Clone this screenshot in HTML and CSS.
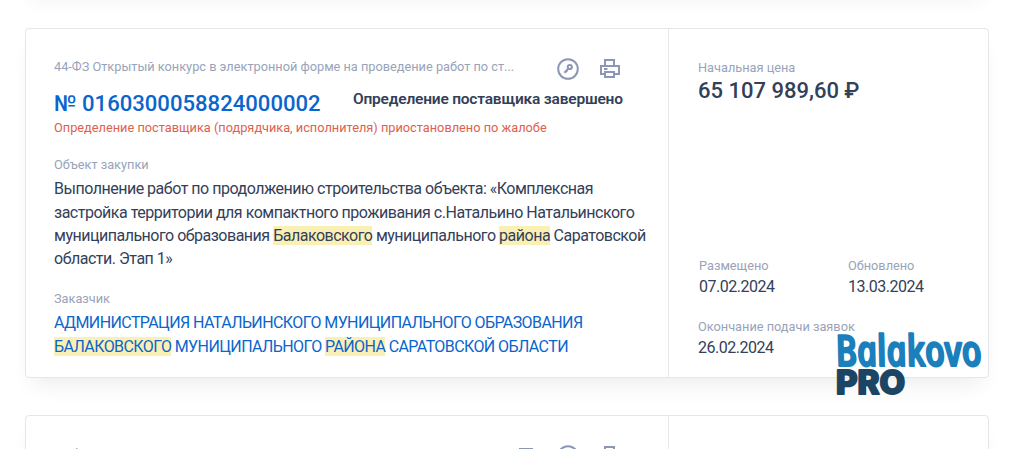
FILE: index.html
```
<!DOCTYPE html>
<html lang="ru">
<head>
    <meta charset="UTF-8">
    <meta name="viewport" content="width=device-width, initial-scale=1.0">
    <title>Закупки</title>
    <link rel="stylesheet" href="styles.css">
</head>
<body>

<div class="results">
    <div class="card card-prev"></div>

    <div class="card">
        <div class="card-main">
            <div class="card-top">
                <div class="card-type">44-ФЗ Открытый конкурс в электронной форме на проведение работ по ст...</div>
                <div class="icons">
                    <svg class="icon" viewBox="0 0 22 22">
                        <circle cx="11" cy="11" r="9.8"/>
                        <circle cx="12.8" cy="9" r="2.1"/>
                        <path d="M11.2 10.8l-3.8 4M8.6 12.6l1.6 1.4"/>
                    </svg>
                    <svg class="icon" viewBox="0 0 22 22">
                        <path d="M6 8V2h9v6M6 16H2V8h18v8h-5M6 14h9v5H6zM5 11h3.500"/>
                    </svg>
                </div>
            </div>
            <div class="card-number">
                <a class="number" href="#">№ 0160300058824000002</a>
                <span class="status">Определение поставщика завершено</span>
            </div>
            <div class="warning">Определение поставщика (подрядчика, исполнителя) приостановлено по жалобе</div>

            <div class="label label-object">Объект закупки</div>
            <div class="text">Выполнение работ по продолжению строительства объекта: «Комплексная<br>
                застройка территории для компактного проживания с.Натальино Натальинского<br>
                муниципального образования <mark>Балаковского</mark> муниципального <mark>района</mark> Саратовской<br>
                области. Этап 1»</div>

            <div class="label label-customer">Заказчик</div>
            <a class="text customer" href="#">АДМИНИСТРАЦИЯ НАТАЛЬИНСКОГО МУНИЦИПАЛЬНОГО ОБРАЗОВАНИЯ<br>
                <mark>БАЛАКОВСКОГО</mark> МУНИЦИПАЛЬНОГО <mark>РАЙОНА</mark> САРАТОВСКОЙ ОБЛАСТИ</a>
        </div>
        <div class="card-side">
            <div class="price-block">
                <div class="label">Начальная цена</div>
                <div class="price">65 107 989,60 ₽</div>
            </div>
            <div class="dates">
                <div>
                    <div class="label">Размещено</div>
                    <div class="date">07.02.2024</div>
                </div>
                <div>
                    <div class="label">Обновлено</div>
                    <div class="date">13.03.2024</div>
                </div>
            </div>
            <div class="deadline">
                <div class="label">Окончание подачи заявок</div>
                <div class="date">26.02.2024</div>
            </div>
        </div>
    </div>

    <div class="card">
        <div class="card-main">
            <div class="card-top">
                <div class="card-type">44-ФЗ Электронный аукцион</div>
                <div class="icons">
                    <svg class="icon" viewBox="0 0 22 22">
                        <path d="M5 4h12v16H5zM8 9h6M8 13h6"/>
                    </svg>
                    <svg class="icon" viewBox="0 0 22 22">
                        <circle cx="11" cy="11" r="9.8"/>
                    </svg>
                    <svg class="icon" viewBox="0 0 22 22">
                        <path d="M6 8V2h9v6M6 16H2V8h18v8h-5M6 14h9v5H6z"/>
                    </svg>
                </div>
            </div>
        </div>
        <div class="card-side"></div>
    </div>
</div>

<!-- Watermark over the cards -->
<svg class="watermark" viewBox="0 0 150 70">
    <g transform="translate(4 36.5) skewX(11)">
        <text class="wm-name" x="0" y="0" textLength="146" lengthAdjust="spacingAndGlyphs">Balakovo</text>
    </g>
    <text class="wm-pro" x="2" y="64.5" textLength="69" lengthAdjust="spacingAndGlyphs">PRO</text>
</svg>

</body>
</html>
```
FILE: styles.css
```
body {
    font-family: Roboto, Arial, sans-serif;
    background-color: #fff;
    color: #334059;
    margin: 0;
    height: 449px;
    overflow: hidden;
}
.results {
    display: flex;
    flex-direction: column;
    gap: 37px;
    width: 964px;
    margin-left: 25px;
}
.card {
    display: flex;
    flex-shrink: 0;
    box-sizing: border-box;
    height: 350px;
    border: 1px solid #e4e6ea;
    border-radius: 4px;
    background-color: #fff;
    box-shadow: 0 14px 20px -8px rgba(50, 60, 80, 0.09);
}
.card-prev {
    margin-top: -359px;
}
.card-main {
    box-sizing: border-box;
    width: 643px;
    padding: 28px 0 0 28px;
    border-right: 1px solid #e4e6ea;
    white-space: nowrap;
}
.card-side {
    padding: 31px 0 0 29px;
    white-space: nowrap;
}
.card-top {
    display: flex;
    justify-content: space-between;
    align-items: center;
    height: 24px;
    padding-right: 47px;
}
.card-type,
.label {
    font-size: 12.75px;
    line-height: 16px;
    color: #98a3ba;
}
.card-type {
    padding-bottom: 4px;
}
.icons {
    display: flex;
    gap: 20px;
}
.icon {
    width: 22px;
    height: 22px;
    fill: none;
    stroke: #8b97b5;
    stroke-width: 2;
}
.card-number {
    display: flex;
    height: 38px;
    padding-top: 1px;
}
.number {
    width: 299px;
    font-size: 22.1px;
    font-weight: 500;
    line-height: 42px;
    color: #0a65cc;
    text-decoration: none;
}
.status {
    font-size: 15.5px;
    font-weight: 600;
    letter-spacing: -0.2px;
    line-height: 34px;
}
.warning {
    font-size: 12.78px;
    line-height: 16px;
    color: #e0604d;
}
.label-object {
    margin-top: 21px;
}
.text {
    display: block;
    margin-top: 4.4px;
    font-size: 16px;
    letter-spacing: -0.49px;
    line-height: 23.3px;
}
.label-customer {
    margin-top: 20.5px;
}
.customer {
    letter-spacing: -0.59px;
    color: #0a65cc;
    text-decoration: none;
}
mark {
    background-color: #fbf0b4;
    color: inherit;
}
.price {
    font-size: 22px;
    font-weight: 500;
    line-height: 29px;
}
.price-block {
    height: 198px;
}
.dates {
    display: flex;
    gap: 73px;
    height: 61px;
    padding-left: 1px;
}
.dates > div {
    width: 76px;
}
.date {
    margin-top: 4px;
    font-size: 16px;
    letter-spacing: -0.48px;
    line-height: 18px;
}
.watermark {
    position: absolute;
    left: 834px;
    top: 329px;
    width: 150px;
    height: 70px;
    overflow: visible;
    stroke-linejoin: round;
}
/* The italic has the single-storey "a", the skew sets it upright */
.wm-name {
    font-family: "Open Sans", "Noto Sans", sans-serif;
    font-size: 43px;
    font-style: italic;
    font-weight: 600;
    fill: #1b7fbc;
    stroke: #1b7fbc;
    stroke-width: 2.2;
}
.wm-pro {
    font-family: Inter, sans-serif;
    font-size: 32px;
    font-weight: 800;
    fill: #1c4563;
    stroke: #1c4563;
    stroke-width: 2;
}
```
